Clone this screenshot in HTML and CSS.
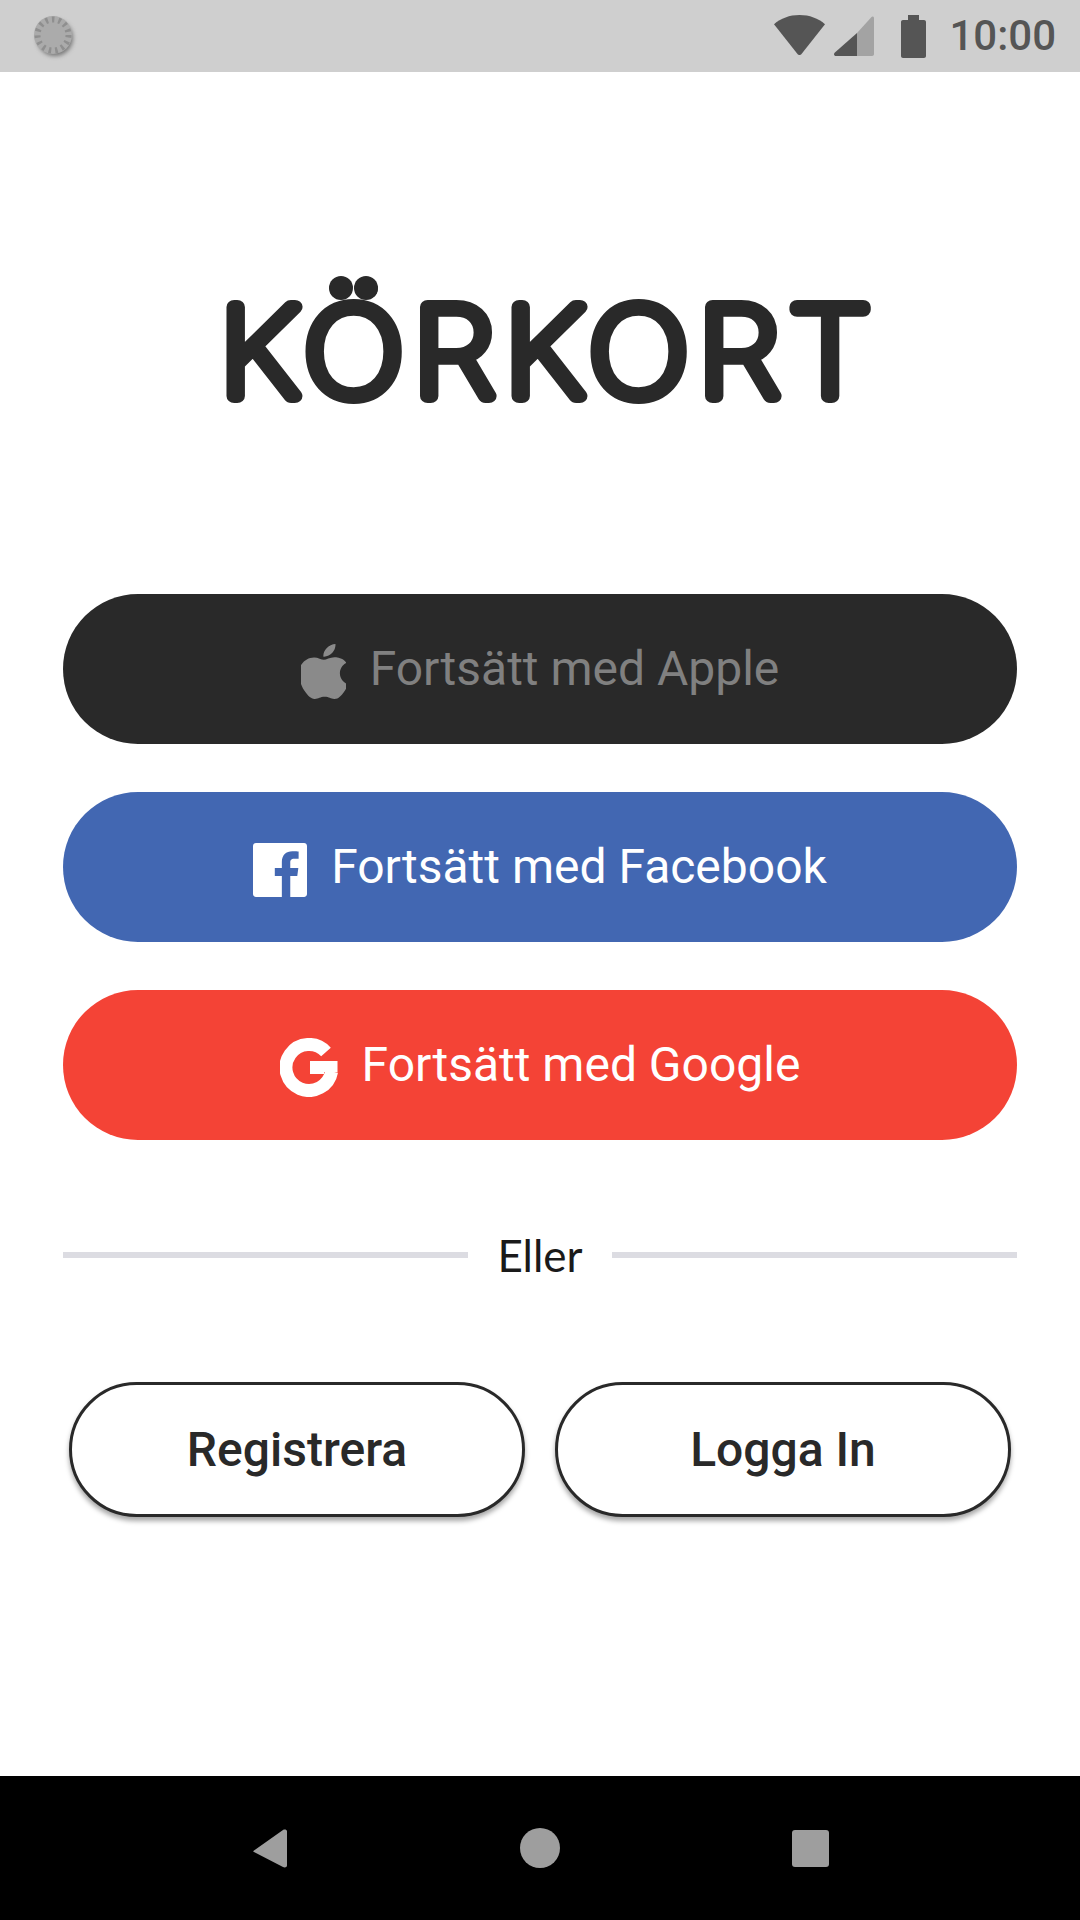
FILE: index.html
```html
<!doctype html>
<html>
<head>
    <meta charset="UTF-8">
    <link rel="stylesheet" href="styles.css">
</head>
<body>
    <div class="container">
        <header class="statusbar">
            <svg class="status-dot" width="44" height="44" viewBox="0 0 44 44">
                <circle class="dot-shadow" cx="23" cy="24" r="18"/>
                <circle class="dot-face" cx="21" cy="21" r="19"/>
                <circle class="dot-ticks" cx="21" cy="21" r="15.5"/>
            </svg>
            <div class="status-right">
                <svg class="wifi" width="51" height="40" viewBox="0 0 51 40"><path d="M25.5 0C15.500 0 6.800 3.300 0 9.200L23.700 39.200c.9 1.100 2.700 1.100 3.600 0L51 9.200C44.200 3.300 35.500 0 25.500 0z"/></svg>
                <svg class="signal" width="40" height="40" viewBox="0 0 40 40">
                    <path class="signal-off" d="M23 17L37.500 1c1-1 2.500-.5 2.500 1v36c0 1-.8 2-2 2H23z"/>
                    <path d="M23 17V40H2c-1.800 0-2.600-2-1.400-3.200z"/>
                </svg>
                <svg class="battery" width="25" height="43" viewBox="0 0 25 43"><path d="M7 0h11v5h5c1.100 0 2 .9 2 2v34c0 1.100-.9 2-2 2H2c-1.100 0-2-.9-2-2V7c0-1.100.9-2 2-2h5z"/></svg>
                <span class="clock">10:00</span>
            </div>
        </header>

        <main class="content">
            <svg class="logo" width="660" height="140" viewBox="0 0 660 140">
                <text class="logo-text" transform="scale(1.1 1)" x="1" y="126">KÖRKORT</text>
                <circle class="logo-dot" cx="123" cy="18" r="12"/>
                <circle class="logo-dot" cx="148" cy="18" r="12"/>
            </svg>

            <a class="social apple">
                <svg width="45" height="55" viewBox="3 0 18 24" preserveAspectRatio="none"><path d="M12.152 6.896c-.948 0-2.415-1.078-3.960-1.040-2.040.027-3.910 1.183-4.961 3.014-2.117 3.675-.546 9.103 1.519 12.090 1.013 1.454 2.208 3.090 3.792 3.039 1.520-.065 2.090-.987 3.935-.987 1.831 0 2.350.987 3.960.948 1.637-.026 2.676-1.480 3.676-2.948 1.156-1.688 1.636-3.325 1.662-3.415-.039-.013-3.182-1.221-3.220-4.857-.026-3.040 2.480-4.494 2.597-4.559-1.429-2.090-3.623-2.324-4.390-2.376-2-.156-3.675 1.090-4.610 1.090zM15.530 3.830c.843-1.012 1.400-2.427 1.245-3.830-1.207.052-2.662.805-3.532 1.818-.780.896-1.454 2.338-1.273 3.714 1.338.104 2.715-.688 3.559-1.701"/></svg>
                <span>Fortsätt med Apple</span>
            </a>
            <a class="social facebook">
                <svg width="54" height="54" viewBox="0 0 24 24"><path d="M22.675 0H1.325C.593 0 0 .593 0 1.325v21.351C0 23.407.593 24 1.325 24H12.820v-9.294H9.692v-3.622h3.128V8.413c0-3.100 1.893-4.788 4.659-4.788 1.325 0 2.463.099 2.795.143v3.240l-1.918.001c-1.504 0-1.795.715-1.795 1.763v2.313h3.587l-.467 3.622h-3.120V24h6.116c.730 0 1.323-.593 1.323-1.325V1.325C24 .593 23.407 0 22.675 0z"/></svg>
                <span>Fortsätt med Facebook</span>
            </a>
            <a class="social google">
                <svg width="58" height="59" viewBox="0 0 58 59">
                    <path class="g-arc" d="M46 14A23 23 0 1 0 51.600 33.500"/>
                    <path d="M30 23H57.500V34H44V36H30z"/>
                </svg>
                <span>Fortsätt med Google</span>
            </a>

            <div class="divider">
                <span class="divider-line"></span>
                <span class="divider-text">Eller</span>
                <span class="divider-line"></span>
            </div>

            <div class="actions">
                <a class="pill">Registrera</a>
                <a class="pill">Logga In</a>
            </div>
        </main>

        <footer class="navbar">
            <svg width="34" height="39" viewBox="0 0 34 39"><path d="M1 21.500L30 1c1.500-1 4-.5 4 1.500v34c0 2-2.500 2.500-4 1.500L1 23c-1-.5-1-1 0-1.500z"/></svg>
            <svg width="40" height="40" viewBox="0 0 40 40"><circle cx="20" cy="20" r="20"/></svg>
            <svg width="37" height="37" viewBox="0 0 37 37"><rect width="37" height="37" rx="3"/></svg>
        </footer>
    </div>
</body>
</html>
```

FILE: styles.css
```css
* {
    box-sizing: border-box;
}
body {
    margin: 0;
    background-color: #fff;
    font-family: Roboto, sans-serif;
}

.container {
    width: 1080px;
    height: 1920px;
    display: flex;
    flex-direction: column;
}

.statusbar {
    height: 72px;
    flex-shrink: 0;
    background-color: #cfcfcf;
    display: flex;
    justify-content: space-between;
    align-items: center;
    padding: 0 24px 0 32px;
}
.status-dot {
    overflow: visible;
}
.dot-shadow {
    fill: #777;
    filter: blur(2px);
}
.dot-face {
    fill: #ababab;
}
.dot-ticks {
    fill: none;
    stroke: #8f8f8f;
    stroke-width: 6;
    stroke-dasharray: 2.5 4;
}
.status-right {
    display: flex;
    align-items: center;
}
.status-right svg {
    fill: #555;
}
.wifi {
    margin-top: -2px;
}
.signal {
    margin-left: 9px;
}
.signal-off {
    fill: #a3a3a3;
}
.battery {
    margin-left: 27px;
}
.clock {
    margin-left: 23px;
    color: #555;
    font-size: 42px;
    font-weight: 500;
    line-height: 72px;
}

.content {
    flex: 1;
    padding: 0 63px;
    display: flex;
    flex-direction: column;
}

.logo {
    margin: 198px 0 184px 155px;
    flex-shrink: 0;
    overflow: visible;
}
.logo-text {
    font-family: Inter, sans-serif;
    font-size: 122px;
    font-weight: 100;
    letter-spacing: 8px;
    fill: #292929;
    stroke: #292929;
    stroke-width: 14;
    stroke-linecap: round;
    stroke-linejoin: round;
}
.logo-dot {
    fill: #292929;
}

.social {
    height: 150px;
    border-radius: 75px;
    margin-bottom: 48px;
    display: flex;
    align-items: center;
    justify-content: center;
    gap: 24px;
    font-size: 48px;
    color: #fff;
}
.social span {
    margin-top: -2px;
}
.social svg {
    fill: #fff;
    flex-shrink: 0;
    margin-top: 5px;
}
.apple {
    background-color: #292929;
    color: #808080;
}
.apple svg {
    fill: #8a8a8a;
}
.facebook {
    background-color: #4267b2;
}
.facebook svg {
    margin-top: 6px;
}
.google {
    background-color: #f44336;
}
.google .g-arc {
    fill: none;
    stroke: #fff;
    stroke-width: 13;
}

.divider {
    display: flex;
    align-items: center;
    gap: 29px;
    margin-top: 42px;
    height: 50px;
}
.divider-line {
    flex: 1;
    height: 6px;
    background-color: #dcdce2;
}
.divider-text {
    font-family: Lato, sans-serif;
    font-size: 44px;
    color: #1a1a1a;
}

.actions {
    display: flex;
    gap: 30px;
    margin-top: 102px;
    padding: 0 6px;
}
.pill {
    flex: 1;
    height: 135px;
    border: 3px solid #292929;
    border-radius: 68px;
    background-color: #fff;
    box-shadow: 0 4px 5px rgba(0, 0, 0, 0.35);
    display: flex;
    align-items: center;
    justify-content: center;
    font-size: 48px;
    font-weight: 500;
    color: #292929;
}

.navbar {
    height: 144px;
    flex-shrink: 0;
    background-color: #000;
    display: grid;
    grid-template-columns: repeat(3, 270px);
    justify-content: center;
    justify-items: center;
    align-items: center;
}
.navbar svg {
    fill: #9e9e9e;
}
```
